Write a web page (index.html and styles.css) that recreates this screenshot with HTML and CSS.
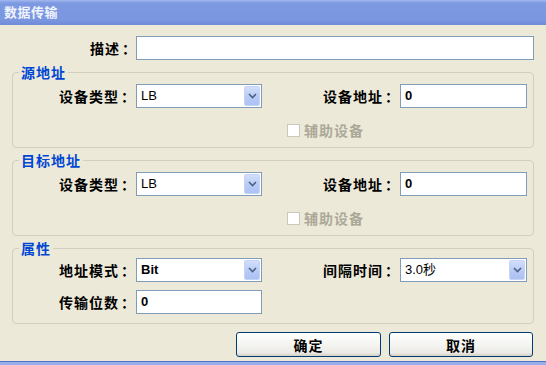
FILE: index.html
```html
<!DOCTYPE html>
<html lang="zh-CN">
<head>
  <meta charset="UTF-8">
  <meta name="viewport" content="width=device-width, initial-scale=1.0">
  <title>数据传输</title>
  <link rel="stylesheet" href="styles.css">
</head>
<body>
  <div class="window">
    <div class="titlebar">数据传输</div>

    <div class="content">
      <div class="desc-row">
        <span class="label">描述<span class="colon">：</span></span>
        <div class="field"></div>
      </div>

      <fieldset class="group">
        <legend>源地址</legend>
        <div class="grid">
          <span class="label">设备类型<span class="colon">：</span></span>
          <div class="combo">
            <span class="value">LB</span>
            <span class="arrow"><svg width="9" height="6" viewBox="0 0 9 6"><path d="M1 1 L4.5 4.5 L8 1" fill="none" stroke="#4d6185" stroke-width="1.6"/></svg></span>
          </div>
          <span class="label">设备地址<span class="colon">：</span></span>
          <div class="field"><span class="value bold">0</span></div>
          <div class="check-row"><span class="check"></span>辅助设备</div>
        </div>
      </fieldset>

      <fieldset class="group">
        <legend>目标地址</legend>
        <div class="grid">
          <span class="label">设备类型<span class="colon">：</span></span>
          <div class="combo">
            <span class="value">LB</span>
            <span class="arrow"><svg width="9" height="6" viewBox="0 0 9 6"><path d="M1 1 L4.5 4.5 L8 1" fill="none" stroke="#4d6185" stroke-width="1.6"/></svg></span>
          </div>
          <span class="label">设备地址<span class="colon">：</span></span>
          <div class="field"><span class="value bold">0</span></div>
          <div class="check-row"><span class="check"></span>辅助设备</div>
        </div>
      </fieldset>

      <fieldset class="group props">
        <legend>属性</legend>
        <div class="grid tight">
          <span class="label">地址模式<span class="colon">：</span></span>
          <div class="combo">
            <span class="value bold">Bit</span>
            <span class="arrow"><svg width="9" height="6" viewBox="0 0 9 6"><path d="M1 1 L4.5 4.5 L8 1" fill="none" stroke="#4d6185" stroke-width="1.6"/></svg></span>
          </div>
          <span class="label">间隔时间<span class="colon">：</span></span>
          <div class="combo">
            <span class="value">3.0秒</span>
            <span class="arrow"><svg width="9" height="6" viewBox="0 0 9 6"><path d="M1 1 L4.5 4.5 L8 1" fill="none" stroke="#4d6185" stroke-width="1.6"/></svg></span>
          </div>
          <span class="label">传输位数<span class="colon">：</span></span>
          <div class="field"><span class="value bold">0</span></div>
        </div>
      </fieldset>

      <div class="buttons">
        <button class="btn ok">确定</button>
        <button class="btn">取消</button>
      </div>
    </div>

    <div class="frame-edge"></div>
  </div>
</body>
</html>
```

FILE: styles.css
```css
html, body {margin: 0; height: 100%; overflow: hidden}
body {
  background: #ece9d8;
  font-family: "Noto Sans CJK SC", "Liberation Sans", sans-serif;
}

.window {
  width: 546px;
  height: 365px;
  display: flex;
  flex-direction: column;
}

.titlebar {
  height: 25px;
  box-sizing: border-box;
  padding: 3px 0 0 4px;
  background: linear-gradient(to bottom, #a3b8ee 0%, #7d99e2 12%, #7a96df 80%, #6f8bd8 100%);
  color: #eef3fd;
  font-size: 13px;
  font-weight: 700;
  line-height: 18px;
  letter-spacing: 0.5px;
}

.content {
  padding: 11px 12px 0;
  flex: 1;
}

.label {
  font-size: 14px;
  font-weight: 700;
  letter-spacing: 1px;
  color: #000;
  text-align: right;
  line-height: 24px;
  height: 24px;
  white-space: nowrap;
}
/* the full-width colon sits left in its box, nudge it to the middle */
.colon {
  letter-spacing: 0;
  margin-left: 2px;
  margin-right: -2px;
}

/* description row */
.desc-row {
  display: grid;
  grid-template-columns: 124px 1fr;
  height: 24px;
}
.desc-row .label { padding-right: 2px; }

.field, .combo {
  box-sizing: border-box;
  height: 24px;
  border: 1px solid #7f9db9;
  background: #fff;
  display: flex;
  align-items: center;
}

.value {
  font-family: "Liberation Sans", "Noto Sans CJK SC", sans-serif;
  font-size: 13px;
  line-height: 20px;
  padding-left: 4px;
  color: #000;
}
.value.bold { font-weight: 700; }

.combo {
  padding: 1px;
  align-items: stretch;
}
.combo .value {
  flex: 1;
  padding-left: 3px;
}
.arrow {
  width: 16px;
  box-sizing: border-box;
  border: 1px solid #c4d3f7;
  border-radius: 2px;
  background: linear-gradient(to bottom, #d2defa, #b6c9f6 60%, #adc2f4);
  display: flex;
  align-items: center;
  justify-content: center;
}

/* group boxes */
.group {
  margin: 4px 0 0;
  padding: 4px 6px 9px;
  border: 1px solid #d0d0bf;
  border-radius: 4px;
  min-width: 0;
}
.group legend {
  padding: 0 2px;
  color: #0046d5;
  font-size: 14px;
  font-weight: 700;
  line-height: 16px;
  letter-spacing: 1px;
}
.group.props { padding-top: 2px; }

.grid {
  display: grid;
  grid-template-columns: 117px 126px 138px 127px;
  align-items: start;
}
.grid .label { padding-right: 3px; }
.grid.tight { row-gap: 8px; }

.check-row {
  grid-column: 3 / 5;
  margin-top: 14px;
  height: 16px;
  padding-left: 25px;
  display: flex;
  align-items: center;
  gap: 4px;
  color: #aca899;
  font-size: 14px;
  font-weight: 700;
  letter-spacing: 1px;
}
.check {
  width: 13px;
  height: 13px;
  box-sizing: border-box;
  border: 1px solid #cac8bb;
  background: #fff;
}

/* buttons */
.buttons {
  display: flex;
  justify-content: flex-end;
  gap: 8px;
  margin-top: 8px;
  padding-right: 1px;
}
.btn {
  width: 144px;
  height: 25px;
  border: 1px solid #003c74;
  border-radius: 3px;
  background: linear-gradient(to bottom, #ffffff 0%, #f4f4f0 50%, #ecebe6 85%, #d6d0c5 100%);
  font-family: "Noto Sans CJK SC", sans-serif;
  font-size: 14px;
  font-weight: 700;
  letter-spacing: 1px;
  color: #000;
  padding: 0;
  line-height: 22px;
}
.btn.ok { width: 145px; }

.frame-edge {
  height: 4px;
  border-top: 1px solid #4f6fc9;
  background: #98afe9;
  box-sizing: border-box;
}
```
